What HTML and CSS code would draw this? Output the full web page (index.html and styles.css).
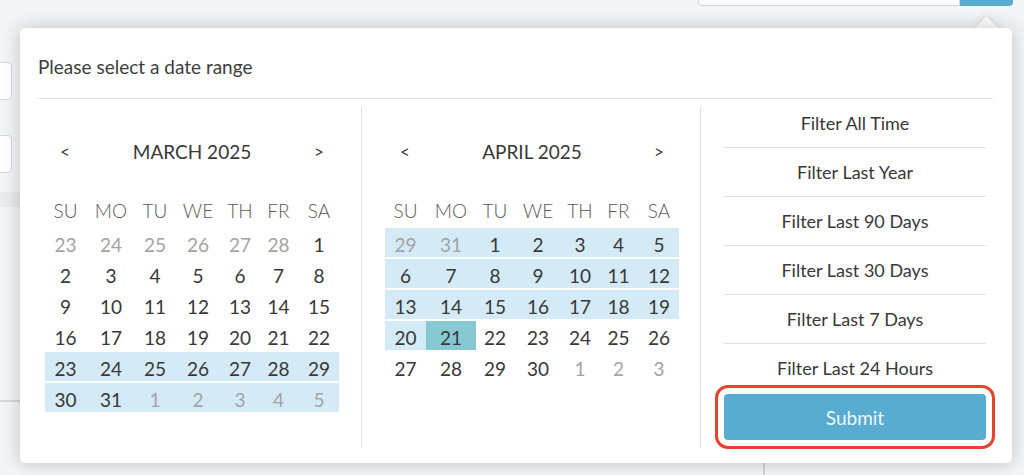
FILE: index.html
```html
<!DOCTYPE html>
<html lang="en">
<head>
  <meta charset="UTF-8">
  <title>Date Range Picker</title>
  <link rel="stylesheet" href="styles.css">
</head>
<body>
  <div class="page">
    <header class="topbar">
      <div class="search"></div>
      <div class="search-btn"></div>
    </header>
    <div class="content">
      <div class="main">
        <div class="field"></div>
        <div class="field"></div>
        <div class="band"></div>
        <div class="rule"></div>
      </div>
    </div>
  </div>

  <div class="picker">
    <h3 class="picker-title">Please select a date range</h3>
    <div class="picker-body">
      <div class="cal cal-first">
        <div class="cal-head"><span class="cal-nav">&lt;</span><span class="cal-month">MARCH 2025</span><span class="cal-nav">&gt;</span></div>
        <div class="cal-row cal-days"><span>SU</span><span>MO</span><span>TU</span><span>WE</span><span>TH</span><span>FR</span><span>SA</span></div>
        <div class="cal-row"><span class="off">23</span><span class="off">24</span><span class="off">25</span><span class="off">26</span><span class="off">27</span><span class="off">28</span><span>1</span></div>
        <div class="cal-row"><span>2</span><span>3</span><span>4</span><span>5</span><span>6</span><span>7</span><span>8</span></div>
        <div class="cal-row"><span>9</span><span>10</span><span>11</span><span>12</span><span>13</span><span>14</span><span>15</span></div>
        <div class="cal-row"><span>16</span><span>17</span><span>18</span><span>19</span><span>20</span><span>21</span><span>22</span></div>
        <div class="cal-row"><span class="in">23</span><span class="in">24</span><span class="in">25</span><span class="in">26</span><span class="in">27</span><span class="in">28</span><span class="in">29</span></div>
        <div class="cal-row"><span class="in">30</span><span class="in">31</span><span class="in off">1</span><span class="in off">2</span><span class="in off">3</span><span class="in off">4</span><span class="in off">5</span></div>
      </div>

      <div class="cal cal-second">
        <div class="cal-head"><span class="cal-nav">&lt;</span><span class="cal-month">APRIL 2025</span><span class="cal-nav">&gt;</span></div>
        <div class="cal-row cal-days"><span>SU</span><span>MO</span><span>TU</span><span>WE</span><span>TH</span><span>FR</span><span>SA</span></div>
        <div class="cal-row"><span class="in off">29</span><span class="in off">31</span><span class="in">1</span><span class="in">2</span><span class="in">3</span><span class="in">4</span><span class="in">5</span></div>
        <div class="cal-row"><span class="in">6</span><span class="in">7</span><span class="in">8</span><span class="in">9</span><span class="in">10</span><span class="in">11</span><span class="in">12</span></div>
        <div class="cal-row"><span class="in">13</span><span class="in">14</span><span class="in">15</span><span class="in">16</span><span class="in">17</span><span class="in">18</span><span class="in">19</span></div>
        <div class="cal-row"><span class="in">20</span><span class="end">21</span><span>22</span><span>23</span><span>24</span><span>25</span><span>26</span></div>
        <div class="cal-row"><span>27</span><span>28</span><span>29</span><span>30</span><span class="off">1</span><span class="off">2</span><span class="off">3</span></div>
      </div>

      <div class="presets">
        <button class="preset">Filter All Time</button>
        <button class="preset">Filter Last Year</button>
        <button class="preset">Filter Last 90 Days</button>
        <button class="preset">Filter Last 30 Days</button>
        <button class="preset">Filter Last 7 Days</button>
        <button class="preset">Filter Last 24 Hours</button>
        <button class="submit">Submit</button>
      </div>
    </div>
  </div>
</body>
</html>
```

FILE: styles.css
```css
body {
  margin: 0;
  height: 475px;
  overflow: hidden;
  background: #f3f4f6;
  font-family: Lato, "Open Sans", sans-serif;
  color: #383838;
}

/* page behind the popup */
.topbar {
  display: flex;
  justify-content: flex-end;
  height: 28px;
  padding-right: 11px;
}

.search {
  width: 262px;
  height: 36px;
  margin-top: -30px;
  box-sizing: border-box;
  background: #fafbfc;
  border: 1px solid #cfd5dd;
  border-radius: 4px 0 0 4px;
}

.search-btn {
  width: 53px;
  height: 36px;
  margin-top: -30px;
  background: #58acd0;
  border-radius: 0 4px 4px 0;
}

.content {
  display: flex;
  height: 447px;
}

.main {
  width: 763px;
  padding-top: 34px;
  border-right: 2px solid #cfd4da;
}

.field {
  width: 40px;
  height: 38px;
  margin-left: -28px;
  margin-bottom: 35px;
  box-sizing: border-box;
  background: #fff;
  border: 1px solid #d3d8de;
  border-radius: 4px;
}

.band {
  height: 15px;
  margin-top: -16px;
  background: #e9ebee;
}

.rule {
  height: 2px;
  margin-top: 193px;
  background: #d3d8de;
}

/* popup */
.picker {
  position: absolute;
  left: 20px;
  top: 28px;
  width: 992px;
  height: 435px;
  box-sizing: border-box;
  padding: 28px 19px 15px 18px;
  background: #fff;
  border-radius: 5px;
  box-shadow: 0 0 18px rgba(0, 0, 0, 0.22);
}

.picker::before {
  content: "";
  position: absolute;
  top: -8px;
  right: 17px;
  width: 17px;
  height: 17px;
  background: #fff;
  transform: rotate(45deg);
  box-shadow: -2px -2px 6px rgba(0, 0, 0, 0.08);
  z-index: -1;
}

.picker-title {
  margin: 0;
  padding-bottom: 20px;
  border-bottom: 1px solid #dde2e8;
  font-size: 19px;
  font-weight: 400;
  line-height: 22px;
  color: #3d3d3d;
}

.picker-body {
  display: flex;
  height: 349px;
}

.cal {
  margin-top: 8px;
  padding-top: 34px;
  box-sizing: border-box;
  border-right: 1px solid #dde2e8;
}

.cal-first {
  width: 324px;
  padding-left: 7px;
}

.cal-second {
  width: 339px;
  padding-left: 23px;
}

.cal-head {
  display: flex;
  justify-content: space-between;
  align-items: center;
  width: 294px;
  font-size: 19px;
  line-height: 22px;
}

.cal-nav {
  width: 40px;
  text-align: center;
  font-size: 17px;
}

.cal-row {
  display: grid;
  grid-template-columns: 41px 50px 38px 48px 36px 41px 40px;
  width: 294px;
  height: 29px;
  margin-top: 2px;
  font-size: 19px;
  text-align: center;
}

.cal-row span {
  padding-top: 5px;
  line-height: 24px;
}

.cal-days {
  margin-top: 31px;
  margin-bottom: 5px;
  color: #5a5a5a;
  font-weight: 300;
}

.cal-row .in {
  background: #d4eaf7;
}

.cal-row .off {
  color: #a3a3a3;
}

.cal-row .end {
  background: #88c8d2;
}

.presets {
  display: flex;
  flex-direction: column;
  width: 292px;
  padding: 0 7px 0 23px;
  box-sizing: border-box;
}

.preset {
  height: 49px;
  padding: 0;
  border: 0;
  border-bottom: 1px solid #dde2e8;
  background: none;
  font-family: inherit;
  font-size: 18px;
  color: #383838;
  cursor: pointer;
}

.preset:nth-last-child(2) {
  height: 48px;
  border-bottom: 0;
}

.submit {
  height: 46px;
  margin-top: 2px;
  border: 0;
  border-radius: 4px;
  background: #58acd0;
  color: #eef7fb;
  font-family: inherit;
  font-size: 19px;
  outline: 3px solid #e4432c;
  outline-offset: 6px;
  cursor: pointer;
}
```
